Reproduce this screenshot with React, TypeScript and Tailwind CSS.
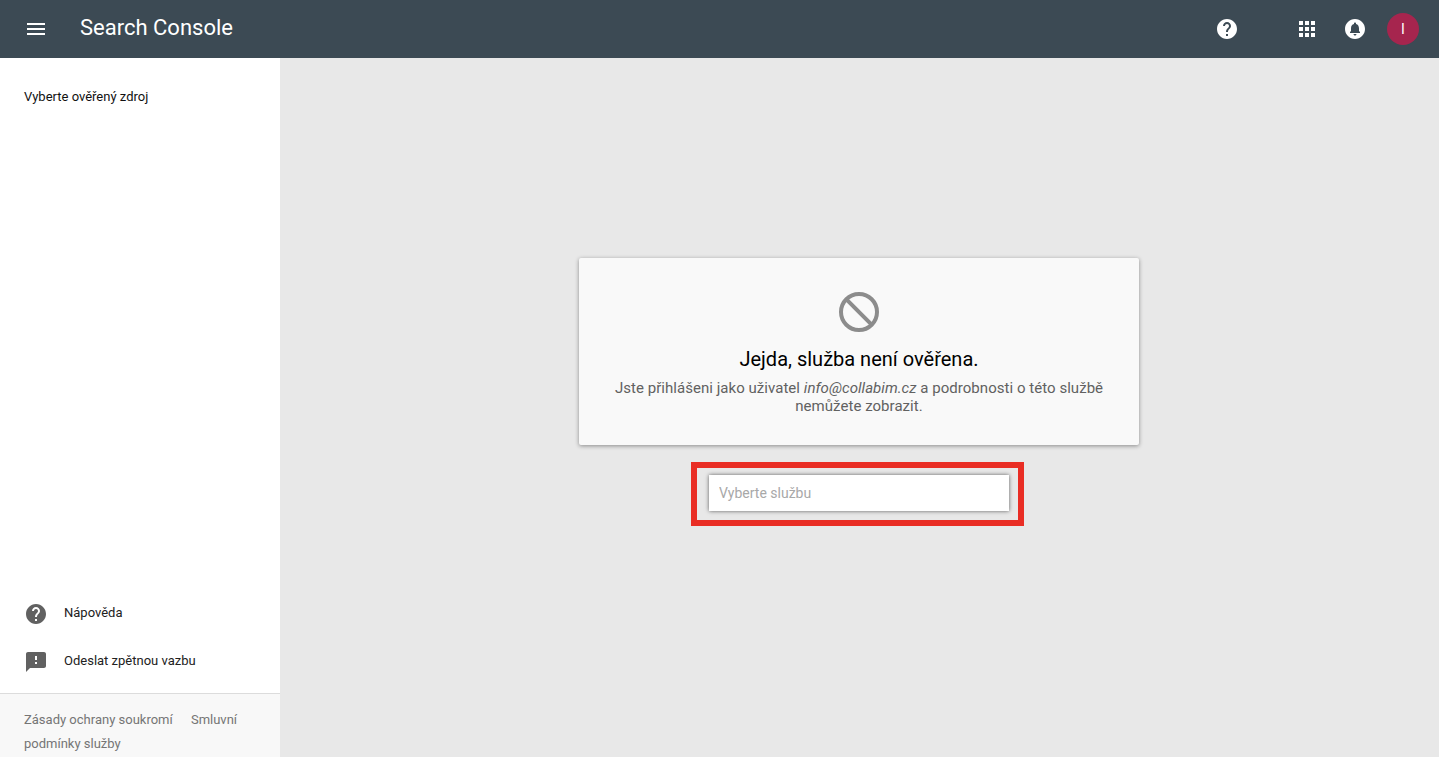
const MenuIcon = () => (
  <svg width="24" height="24" viewBox="0 0 24 24" fill="#fff">
    <path d="M3 18h18v-2H3v2zm0-5h18v-2H3v2zm0-7v2h18V6H3z" />
  </svg>
);

const HelpIcon = ({ color }: { color: string }) => (
  <svg width="24" height="24" viewBox="0 0 24 24" fill={color}>
    <path d="M12 2C6.48 2 2 6.48 2 12s4.48 10 10 10 10-4.48 10-10S17.52 2 12 2zm1 17h-2v-2h2v2zm2.07-7.75l-.9.92C13.45 12.9 13 13.5 13 15h-2v-.5c0-1.1.45-2.1 1.17-2.83l1.24-1.26c.37-.36.59-.86.59-1.41 0-1.1-.9-2-2-2s-2 .9-2 2H8c0-2.21 1.79-4 4-4s4 1.79 4 4c0 .88-.36 1.68-.93 2.25z" />
  </svg>
);

const AppsIcon = () => (
  <svg width="24" height="24" viewBox="0 0 24 24" fill="#fff">
    <path d="M4 8h4V4H4v4zm6 12h4v-4h-4v4zm-6 0h4v-4H4v4zm0-6h4v-4H4v4zm6 0h4v-4h-4v4zm6-10v4h4V4h-4zm-6 4h4V4h-4v4zm6 6h4v-4h-4v4zm0 6h4v-4h-4v4z" />
  </svg>
);

const BellIcon = () => (
  <svg width="24" height="24" viewBox="0 0 24 24" fill="#fff">
    <path d="M12 2C6.48 2 2 6.48 2 12s4.48 10 10 10 10-4.48 10-10S17.52 2 12 2zm0 16.5c-.83 0-1.5-.67-1.5-1.5h3c0 .83-.67 1.5-1.5 1.5zm5-2.5H7v-1l1-1v-2.61C8 9.27 9.03 7.47 11 7v-.5c0-.57.43-1 1-1s1 .43 1 1V7c1.97.47 3 2.28 3 4.39V14l1 1v1z" />
  </svg>
);

const FeedbackIcon = () => (
  <svg width="24" height="24" viewBox="0 0 24 24" fill="#616161">
    <path d="M20 2H4c-1.1 0-1.99.9-1.99 2L2 22l4-4h14c1.1 0 2-.9 2-2V4c0-1.1-.9-2-2-2zm-7 12h-2v-2h2v2zm0-4h-2V6h2v4z" />
  </svg>
);

const BlockIcon = () => (
  <svg width="48" height="48" viewBox="0 0 24 24" fill="none" stroke="#8c8c8c" strokeWidth="2">
    <circle cx="12" cy="12" r="9" />
    <path d="M5.7 5.7l12.6 12.6" />
  </svg>
);

export default function App() {
  return (
    <div className="h-[757px] flex flex-col overflow-hidden font-['Roboto',sans-serif]">
      {/* Header */}
      <header className="h-[58px] shrink-0 bg-[#3c4a54] flex items-center text-white">
        <div className="ml-6 w-6 h-6">
          <MenuIcon />
        </div>
        <h1 className="ml-8 -mt-[2px] text-[22px] leading-none">Search Console</h1>
        <div className="ml-auto flex items-center">
          <HelpIcon color="#fff" />
          <div className="ml-[56px]">
            <AppsIcon />
          </div>
          <div className="ml-6">
            <BellIcon />
          </div>
          <div className="ml-[20px] mr-[20px] w-8 h-8 rounded-full bg-[#a6254e] flex items-center justify-center text-[14px]">
            I
          </div>
        </div>
      </header>

      <div className="flex-1 flex min-h-0">
        {/* Sidebar */}
        <aside className="w-[280px] shrink-0 bg-white flex flex-col">
          <div className="pl-6 pt-[30px] text-[13px] leading-[18px] text-[#111]">
            Vyberte ověřený zdroj
          </div>
          <div className="mt-auto">
            <div className="h-12 pl-6 flex items-center gap-4 text-[13px] text-[#212121]">
              <HelpIcon color="#616161" />
              <span className="-mt-[3px]">Nápověda</span>
            </div>
            <div className="h-12 pl-6 flex items-center gap-4 text-[13px] text-[#212121]">
              <FeedbackIcon />
              <span className="-mt-[3px]">Odeslat zpětnou vazbu</span>
            </div>
          </div>
          <footer className="mt-[7px] h-[64px] border-t border-[#dcdcdc] bg-[#f8f8f8] pl-6 pr-4 pt-[14px] text-[13px] leading-6 text-[#757575]">
            <span className="mr-[15px]">Zásady ochrany soukromí</span> Smluvní podmínky služby
          </footer>
        </aside>

        {/* Main */}
        <main className="flex-1 bg-[#e8e8e8] flex flex-col items-start pl-[299px] pt-[200px]">
          <section className="w-[560px] h-[187px] rounded-[2px] bg-[#f9f9f9] shadow-[0_1px_4px_rgba(0,0,0,0.4)] flex flex-col items-center pt-[30px]">
            <BlockIcon />
            <h2 className="mt-[9px] text-[20px] leading-[28px] text-black">Jejda, služba není ověřena.</h2>
            <p className="mt-[6px] w-[500px] text-center text-[15px] leading-[18px] tracking-[0.04px] text-[#616161]">
              Jste přihlášeni jako uživatel <em>info@collabim.cz</em> a podrobnosti o této službě nemůžete zobrazit.
            </p>
          </section>
          <div className="mt-[17px] ml-[112px] w-[333px] h-[64px] border-[6px] border-[#e92d24] pl-3 pt-[7px]">
            <input
              readOnly
              placeholder="Vyberte službu"
              className="w-[300px] h-[36px] bg-white px-[10px] text-[14px] text-[#212121] placeholder:text-[#a8a8a8] outline-none shadow-[0_0_4px_rgba(0,0,0,0.6)]"
            />
          </div>
        </main>
      </div>
    </div>
  );
}
